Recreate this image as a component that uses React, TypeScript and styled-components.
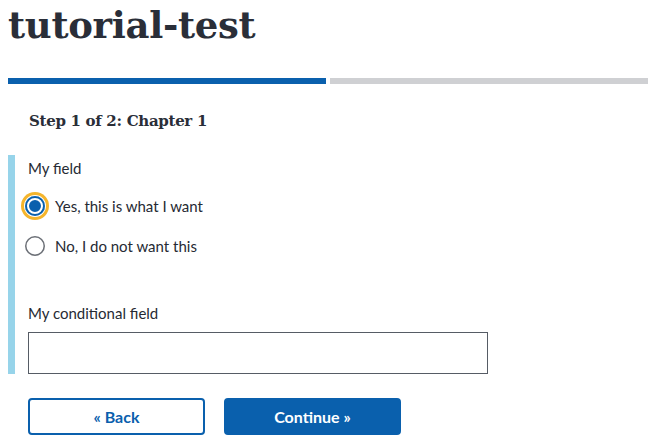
import React from "react";
import styled, { createGlobalStyle } from "styled-components";

const Global = createGlobalStyle`
  html, body { margin: 0; padding: 0; background: #fff; }
  body { font-family: Lato, "Open Sans", sans-serif; color: #262a33; }
  * { box-sizing: border-box; }
`;

const Page = styled.div`
  padding: 0 8px;
  width: 660px;
`;

const Title = styled.h1`
  margin: 0;
  padding-top: 2px;
  font-family: "DejaVu Serif", serif;
  font-weight: 700;
  font-size: 37px;
  line-height: 46px;
  letter-spacing: -0.3px;
  color: #2a2e38;
`;

const Progress = styled.div`
  display: flex;
  gap: 4px;
  width: 640px;
  margin-top: 30px;
`;

const Segment = styled.div<{ $done?: boolean }>`
  flex: 1;
  height: 6px;
  background: ${(p) => (p.$done ? "#0a60ad" : "#cfd0d3")};
`;

const StepHeading = styled.h2`
  margin: 26px 0 0 21px;
  font-family: "DejaVu Serif", serif;
  font-weight: 700;
  font-size: 15px;
  line-height: 22px;
  letter-spacing: -0.3px;
  color: #2a2e38;
`;

const Conditional = styled.div`
  margin-top: 23px;
  border-left: 7px solid #97d4ea;
  padding: 2px 0 0 13px;
  display: flex;
  flex-direction: column;
`;

const Label = styled.div`
  font-size: 15px;
  line-height: 22px;
  color: #262a33;
`;

const RadioGroup = styled.div`
  display: flex;
  flex-direction: column;
  margin-top: 16px;
  gap: 18px;
`;

const RadioRow = styled.label`
  display: flex;
  align-items: center;
  gap: 10px;
  font-size: 15px;
  line-height: 22px;
  color: #262a33;
`;

const RadioDot = styled.span<{ $checked?: boolean }>`
  width: 20px;
  height: 20px;
  border-radius: 50%;
  flex: none;
  margin-left: -3px;
  background: ${(p) => (p.$checked ? "#0a60ad" : "#fff")};
  box-shadow: ${(p) =>
    p.$checked
      ? "inset 0 0 0 2px #0a60ad, inset 0 0 0 4px #fff, 0 0 0 1px #fff, 0 0 0 4px #f5b52c"
      : "inset 0 0 0 1.5px #6b6f76"};
`;

const FieldLabel = styled(Label)`
  margin-top: 45px;
`;

const Input = styled.input`
  margin-top: 8px;
  width: 460px;
  height: 42px;
  border: 1px solid #565c65;
  border-radius: 0;
  padding: 8px;
  font-size: 16px;
  outline: none;
  display: block;
`;

const Actions = styled.div`
  display: flex;
  gap: 19px;
  margin: 24px 0 0 20px;
`;

const Button = styled.button<{ $outline?: boolean }>`
  width: 177px;
  height: 37px;
  border-radius: 4px;
  font-family: Lato, "Open Sans", sans-serif;
  font-weight: 700;
  font-size: 16px;
  border: 2px solid #0a60ad;
  background: ${(p) => (p.$outline ? "#fff" : "#0a60ad")};
  color: ${(p) => (p.$outline ? "#0a60ad" : "#fff")};
  cursor: pointer;
`;

export default function App() {
  return (
    <Page>
      <Global />
      <Title>tutorial-test</Title>
      <Progress>
        <Segment $done />
        <Segment />
      </Progress>
      <StepHeading>Step 1 of 2: Chapter 1</StepHeading>
      <Conditional>
        <Label>My field</Label>
        <RadioGroup>
          <RadioRow>
            <RadioDot $checked />
            Yes, this is what I want
          </RadioRow>
          <RadioRow>
            <RadioDot />
            No, I do not want this
          </RadioRow>
        </RadioGroup>
        <FieldLabel>My conditional field</FieldLabel>
        <Input type="text" />
      </Conditional>
      <Actions>
        <Button $outline>« Back</Button>
        <Button>Continue »</Button>
      </Actions>
    </Page>
  );
}
